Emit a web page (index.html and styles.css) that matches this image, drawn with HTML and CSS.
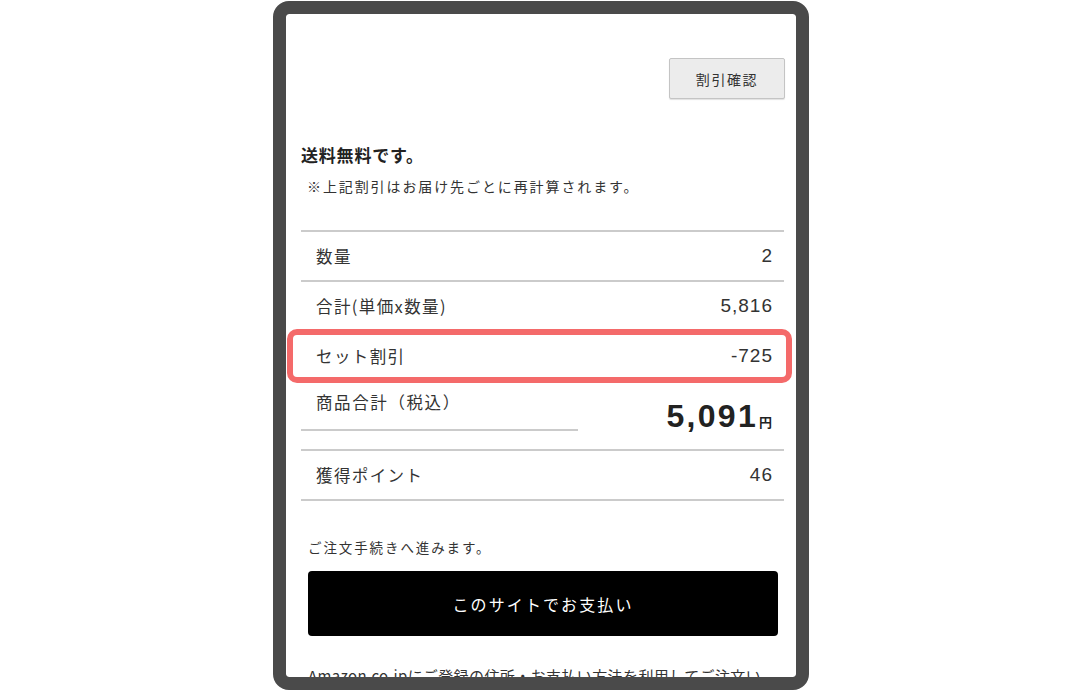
FILE: index.html
```html
<!DOCTYPE html>
<html lang="ja">
<head>
<meta charset="utf-8">
<title>カート</title>
<link rel="stylesheet" href="styles.css">
</head>
<body>
<div class="stage">
  <div class="phone">
    <div class="screen">
      <div class="discount-bar">
        <button class="btn-check" type="button">割引確認</button>
      </div>
      <p class="free">送料無料です。</p>
      <p class="note">※上記割引はお届け先ごとに再計算されます。</p>

      <div class="summary">
        <div class="row">
          <span class="label">数量</span>
          <span class="num">2</span>
        </div>
        <div class="row">
          <span class="label">合計(単価x数量)</span>
          <span class="num">5,816</span>
        </div>
        <div class="row highlight">
          <span class="label">セット割引</span>
          <span class="num">-725</span>
        </div>
        <div class="total">
          <div class="total-label">商品合計（税込）</div>
          <div class="total-price"><span class="big">5,091</span><span class="yen">円</span></div>
        </div>
        <div class="row">
          <span class="label">獲得ポイント</span>
          <span class="num">46</span>
        </div>
      </div>

      <div class="checkout">
        <p class="proceed">ご注文手続きへ進みます。</p>
        <button class="pay" type="button">このサイトでお支払い</button>
        <p class="amazon">Amazon.co.jpにご登録の住所・お支払い方法を利用してご注文いただけます。</p>
      </div>
    </div>
  </div>
</div>
</body>
</html>
```

FILE: styles.css
```css
* { box-sizing: border-box; }

html, body {
  margin: 0;
  padding: 0;
  background: #ffffff;
}

body {
  font-family: "Noto Sans CJK JP", "Noto Sans", sans-serif;
  color: #333333;
}

.stage {
  padding: 1px 0 0 273px;
}

.phone {
  width: 536px;
  height: 689px;
  border: 13px solid #4a4a4a;
  border-radius: 16px;
  background: #4a4a4a;
  overflow: hidden;
}

.screen {
  height: 100%;
  background: #ffffff;
  border-radius: 3px;
  overflow: hidden;
  padding: 0 12px 0 15px;
}

.discount-bar {
  display: flex;
  justify-content: flex-end;
  padding-top: 44px;
}

.btn-check {
  width: 116px;
  height: 41px;
  margin-right: -1px;
  background: #ececec;
  border: 1px solid #c4c4c4;
  border-radius: 2px;
  box-shadow: 0 1px 1px rgba(0, 0, 0, 0.12);
  font-family: "Noto Sans CJK JP", sans-serif;
  font-size: 14px;
  letter-spacing: 1.6px;
  color: #333333;
  padding: 0;
}

.free {
  margin: 44px 0 0 0;
  font-size: 17px;
  line-height: 24px;
  font-weight: 700;
  letter-spacing: 0.8px;
  color: #222222;
}

.note {
  margin: 9px 0 0 0;
  padding-left: 6px;
  font-size: 14px;
  line-height: 20px;
  letter-spacing: 1.9px;
  color: #333333;
}

.summary {
  margin-top: 34px;
  border-top: 2px solid #cbcbcb;
}

.row {
  height: 50px;
  display: flex;
  align-items: center;
  justify-content: space-between;
  padding: 0 12px 0 15px;
  border-bottom: 2px solid #cbcbcb;
  font-size: 16.5px;
  letter-spacing: 1.4px;
}

.num {
  font-family: "Liberation Sans", Arial, sans-serif;
  font-size: 19px;
  letter-spacing: 1px;
  margin-right: -1px;
}

.highlight {
  position: relative;
}

.highlight::after {
  content: "";
  position: absolute;
  top: -3px;
  bottom: -3px;
  left: -14px;
  right: -8px;
  border: 6px solid #f46a6a;
  border-radius: 10px;
}

.total {
  display: grid;
  grid-template-columns: 277px 1fr;
  height: 69px;
  border-bottom: 2px solid #cbcbcb;
}

.total-label {
  height: 49px;
  padding: 8px 0 0 15px;
  font-size: 16.5px;
  line-height: 24px;
  letter-spacing: 1.6px;
  border-bottom: 2px solid #cbcbcb;
}

.total-price {
  display: flex;
  align-items: baseline;
  justify-content: flex-end;
  padding: 14px 12px 0 0;
  color: #222222;
}

.big {
  font-family: "Liberation Sans", Arial, sans-serif;
  font-weight: 700;
  font-size: 32px;
  line-height: 40px;
  letter-spacing: 2.3px;
}

.yen {
  font-size: 13px;
  font-weight: 700;
  margin-left: 1px;
}

.checkout {
  padding-left: 7px;
}

.proceed {
  margin: 36px 0 0 0;
  font-size: 13.5px;
  line-height: 20px;
  letter-spacing: 1.9px;
}

.pay {
  display: block;
  margin-top: 14px;
  width: 470px;
  height: 65px;
  background: #000000;
  color: #ffffff;
  border: 0;
  border-radius: 4px;
  font-family: "Noto Sans CJK JP", sans-serif;
  font-size: 16px;
  letter-spacing: 2.1px;
  padding: 0;
}

.amazon {
  margin: 28px 0 0 0;
  width: 464px;
  font-size: 15px;
  line-height: 24px;
  letter-spacing: 0.4px;
}
```
